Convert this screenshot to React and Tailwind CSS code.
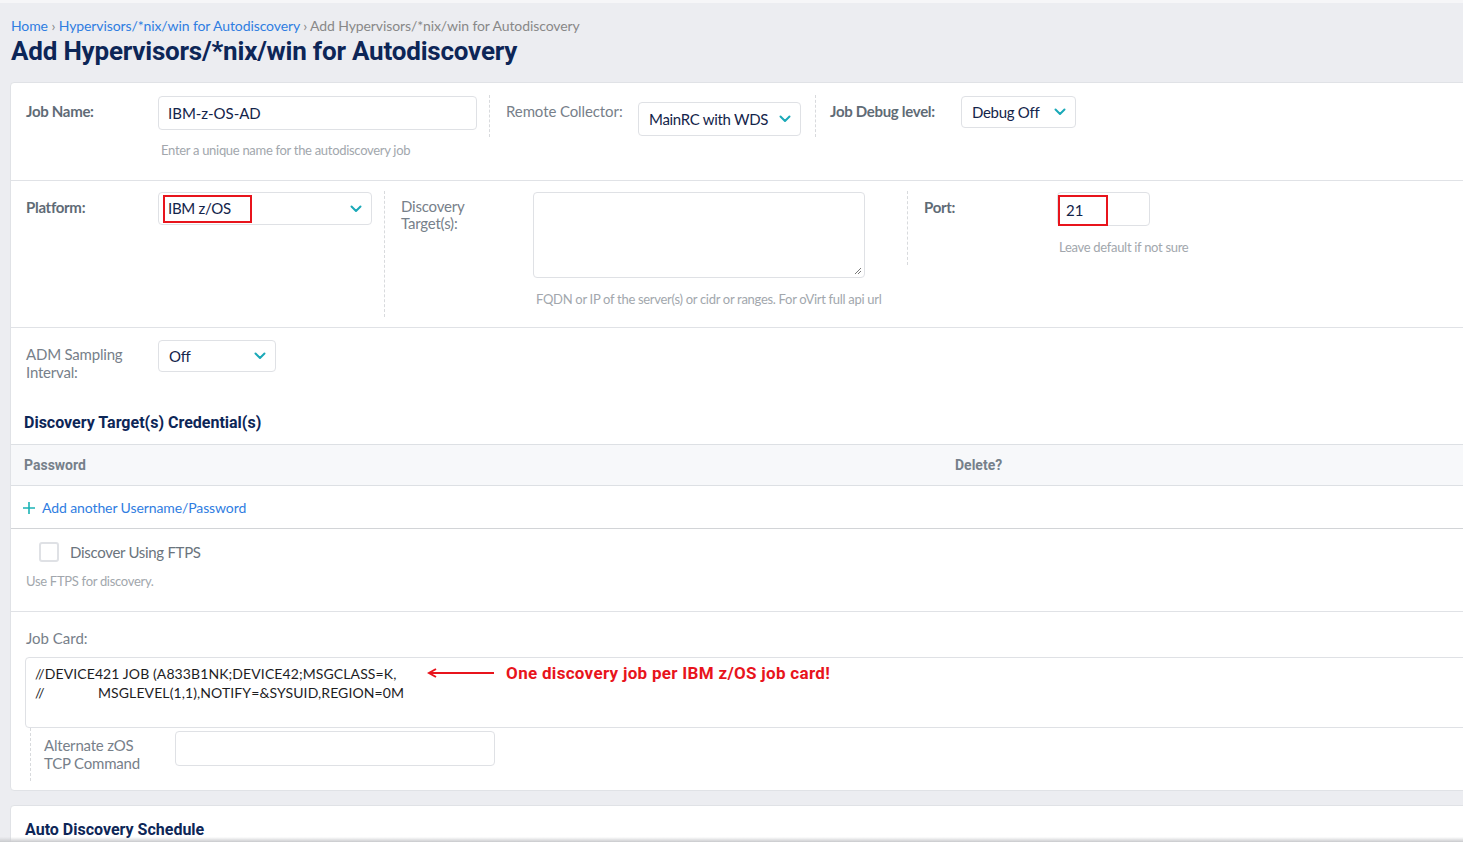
import React from 'react';

function Chevron() {
  return (
    <svg width="12" height="8" viewBox="0 0 12 8" className="shrink-0">
      <path d="M1.5 1.5l4.5 4.5 4.5-4.5" fill="none" stroke="#1aa9b8" strokeWidth="2" strokeLinecap="round" strokeLinejoin="round" />
    </svg>
  );
}

function Select({ value, className, boxed }) {
  return (
    <div className={`flex items-center justify-between bg-white border border-[#dfe1e5] rounded-[4px] pl-[10px] pr-[9px] ${className}`}>
      {boxed ? (
        <span className="border-2 border-[#e8141c] h-[28px] w-[89px] -ml-[6px] pl-[3px] flex items-center text-[15px] text-[#13244a] tracking-[-0.3px]">{value}</span>
      ) : (
        <span className="text-[15px] text-[#13244a] tracking-[-0.3px]">{value}</span>
      )}
      <Chevron />
    </div>
  );
}

function App() {
  return (
    <div className="min-h-screen bg-[#ecedf1] overflow-hidden font-['Lato',sans-serif] border-t-[3px] border-[#f6f6f8]">
      <div className="px-[11px] pt-[14px] h-[79px]">
        <div className="text-[14px] leading-[18px] tracking-[-0.1px]">
          <span className="text-[#2f7de1]">Home</span>
          <span className="text-[#888]"> › </span>
          <span className="text-[#2f7de1]">Hypervisors/*nix/win for Autodiscovery</span>
          <span className="text-[#888]"> › Add Hypervisors/*nix/win for Autodiscovery</span>
        </div>
        <h1 className="font-['Roboto',sans-serif] font-bold text-[26px] leading-[32px] text-[#0d2657] tracking-[-0.2px]">
          Add Hypervisors/*nix/win for Autodiscovery
        </h1>
      </div>

      <div className="ml-[10px] mr-[-20px] bg-white border border-[#e0e2e6] rounded-[4px]">
        {/* row 1 */}
        <div className="flex h-[98px] border-b border-[#e0e2e6]">
          <div className="flex pl-[15px] pt-[13px]">
            <div className="w-[132px] pt-[4px] text-[15px] font-bold text-[#5f6b76] tracking-[-0.3px]">Job Name:</div>
            <div>
              <div className="w-[319px] h-[34px] border border-[#dfe1e5] rounded-[4px] flex items-center pl-[9px] text-[15px] text-[#13244a]">IBM-z-OS-AD</div>
              <div className="mt-[11px] pl-[3px] text-[13px] text-[#a2a7ad] tracking-[-0.3px]">Enter a unique name for the autodiscovery job</div>
            </div>
          </div>
          <div className="ml-[12px] mt-[12px] h-[42px] border-l border-dashed border-[#d8dadd]"></div>
          <div className="flex pl-[16px] pt-[13px]">
            <div className="w-[132px] pt-[4px] text-[15px] text-[#77808a] tracking-[-0.1px]">Remote Collector:</div>
            <Select value="MainRC with WDS" className="w-[163px] h-[34px] mt-[6px]" />
          </div>
          <div className="ml-[14px] mt-[12px] h-[42px] border-l border-dashed border-[#d8dadd]"></div>
          <div className="flex pl-[14px] pt-[13px]">
            <div className="w-[131px] pt-[4px] text-[15px] font-bold text-[#5f6b76] tracking-[-0.3px]">Job Debug level:</div>
            <Select value="Debug Off" className="w-[115px] h-[32px]" />
          </div>
        </div>

        {/* row 2 */}
        <div className="flex h-[147px] border-b border-[#e0e2e6]">
          <div className="flex pl-[15px] pt-[11px]">
            <div className="w-[132px] pt-[4px] text-[15px] font-bold text-[#5f6b76] tracking-[-0.3px]">Platform:</div>
            <Select value="IBM z/OS" className="w-[214px] h-[33px]" boxed />
          </div>
          <div className="ml-[12px] mt-[10px] h-[126px] border-l border-dashed border-[#d8dadd]"></div>
          <div className="flex pl-[16px] pt-[11px]">
            <div className="w-[132px] pt-[6px] text-[15px] leading-[17px] text-[#77808a] tracking-[-0.2px]">Discovery<br />Target(s):</div>
            <div className="w-[332px]">
              <div className="relative w-[332px] h-[86px] border border-[#dfe1e5] rounded-[4px]">
                <svg width="8" height="8" viewBox="0 0 8 8" className="absolute right-[2px] bottom-[2px]">
                  <path d="M7 1L1 7M7 4L4 7" stroke="#777" strokeWidth="1" />
                </svg>
              </div>
              <div className="mt-[12px] pl-[3px] whitespace-nowrap text-[13px] text-[#a2a7ad] tracking-[-0.3px]">FQDN or IP of the server(s) or cidr or ranges. For oVirt full api url</div>
            </div>
          </div>
          <div className="ml-[42px] mt-[10px] h-[74px] border-l border-dashed border-[#d8dadd]"></div>
          <div className="flex pl-[16px] pt-[11px]">
            <div className="w-[133px] pt-[4px] text-[15px] font-bold text-[#5f6b76] tracking-[-0.3px]">Port:</div>
            <div>
              <div className="w-[93px] h-[34px] border border-[#dfe1e5] rounded-[4px] flex items-center">
                <span className="border-2 border-[#e8141c] h-[31px] w-[50px] mt-[2px] pl-[6px] flex items-center text-[15px] text-[#13244a]">21</span>
              </div>
              <div className="mt-[12px] pl-[2px] text-[13px] text-[#a2a7ad] tracking-[-0.3px]">Leave default if not sure</div>
            </div>
          </div>
        </div>

        {/* row 3 */}
        <div className="flex pl-[15px] pt-[12px]">
          <div className="w-[132px] pt-[5px] text-[15px] leading-[18px] text-[#77808a] tracking-[-0.2px]">ADM Sampling<br />Interval:</div>
          <Select value="Off" className="w-[118px] h-[32px]" />
        </div>
        <div className="pl-[13px] pt-[30px] pb-[9px] font-['Roboto',sans-serif] font-bold text-[16px] text-[#0d2657]">
          Discovery Target(s) Credential(s)
        </div>
        <div className="flex items-center h-[42px] bg-[#f7f8fa] border-y border-[#dde0e4] font-['Roboto',sans-serif] font-bold text-[14px] text-[#76808a]">
          <div className="w-[944px] pl-[13px]">Password</div>
          <div>Delete?</div>
        </div>
        <div className="flex items-center h-[43px] pl-[11px] pt-[1px] border-b border-[#d2d4d7]">
          <svg width="14" height="14" viewBox="0 0 14 14" className="mr-[6px]">
            <path d="M7 1v12M1 7h12" stroke="#1bb3b5" strokeWidth="1.6" />
          </svg>
          <span className="text-[14px] text-[#2f7de1] tracking-[-0.1px]">Add another Username/Password</span>
        </div>
        <div className="h-[83px] border-b border-[#e0e2e6] pl-[15px] pt-[12px]">
          <div className="flex items-center pl-[13px]">
            <div className="w-[20px] h-[20px] border-2 border-[#dfe1e5] rounded-[3px]"></div>
            <span className="ml-[11px] text-[15px] text-[#6b747d] tracking-[-0.3px]">Discover Using FTPS</span>
          </div>
          <div className="mt-[8px] text-[13px] text-[#a2a7ad] tracking-[-0.3px]">Use FTPS for discovery.</div>
        </div>
        <div className="pl-[15px] pt-[15px]">
          <div className="text-[15px] text-[#77808a]">Job Card:</div>
          <div className="mt-[7px] -ml-[1px] h-[71px] border border-[#dfe1e5] rounded-l-[4px] pl-[9px] pt-[6px] flex">
            <div className="text-[14px] leading-[19px] text-[#1d1d1f] tracking-[0.1px]">
              <div>//DEVICE421 JOB (A833B1NK;DEVICE42;MSGCLASS=K,</div>
              <div><span className="inline-block w-[63px]">//</span>MSGLEVEL(1,1),NOTIFY=&amp;SYSUID,REGION=0M</div>
            </div>
            <div className="flex items-start ml-[23px]">
              <svg width="67" height="10" viewBox="0 0 67 10" className="mt-[4px]">
                <path d="M3 5h64" stroke="#e8141c" strokeWidth="2" />
                <path d="M9 1L2 5l7 4" fill="none" stroke="#e8141c" strokeWidth="2" />
              </svg>
              <span className="ml-[12px] font-['Roboto',sans-serif] font-bold text-[17px] leading-[19px] text-[#e8141c] tracking-[0.3px]">One discovery job per IBM z/OS job card!</span>
            </div>
          </div>
          <div className="flex ml-[4px] h-[53px] border-l border-dashed border-[#d8dadd] pl-[13px] pt-[3px] mb-[9px]">
            <div className="w-[131px] pt-[5px] text-[15px] leading-[18px] text-[#77808a] tracking-[-0.2px]">Alternate zOS<br />TCP Command</div>
            <div className="w-[320px] h-[35px] border border-[#dfe1e5] rounded-[4px]"></div>
          </div>
        </div>
      </div>

      <div className="ml-[10px] mr-[-20px] mt-[14px] h-[60px] bg-white border border-[#e0e2e6] rounded-[4px] pl-[14px] pt-[12px]">
        <div className="font-['Roboto',sans-serif] font-bold text-[16px] text-[#0d2657]">Auto Discovery Schedule</div>
      </div>
      <div className="fixed left-0 right-0 bottom-0 h-[5px] bg-gradient-to-b from-transparent to-[#c9cacd]"></div>
    </div>
  );
}

export default App;
